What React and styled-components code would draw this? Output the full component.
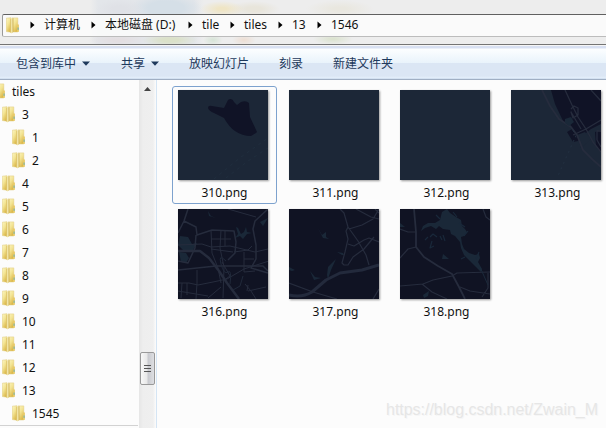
import React from "react";
import styled, { createGlobalStyle } from "styled-components";

const Global = createGlobalStyle`
  * { box-sizing: border-box; }
  body { margin: 0; background: #fcfcfc; overflow: hidden; }
`;

const Window = styled.div`
  position: relative;
  width: 606px;
  height: 428px;
  overflow: hidden;
  display: flex;
  flex-direction: column;
  background: #fcfcfc;
  color: #111;
  font: 12px/16px "Noto Sans", "Noto Sans CJK SC", sans-serif;
  white-space: nowrap;
`;

const Header = styled.header`
  height: 45px;
  flex: none;
  padding: 14px 0 0 2px;
  border-bottom: 1px solid #747474;
  background:
    radial-gradient(ellipse 24px 10px at 120px 9px, #dfe1e6 30%, transparent),
    radial-gradient(ellipse 36px 14px at 166px 8px, #d5dfe7 50%, transparent),
    radial-gradient(ellipse 22px 8px at 222px 9px, #efe5c5 20%, transparent),
    radial-gradient(ellipse 26px 8px at 254px 9px, #e8e5db 30%, transparent),
    radial-gradient(ellipse 34px 9px at 340px 9px, #e9e7df 20%, transparent),
    radial-gradient(ellipse 30px 7px at 118px 40px, #e3dee1 20%, transparent),
    radial-gradient(ellipse 28px 7px at 170px 40px, #dbe1c9 30%, transparent),
    radial-gradient(ellipse 10px 6px at 213px 40px, #d9e5d9 10%, transparent),
    radial-gradient(ellipse 12px 6px at 244px 40px, #eddfd5 10%, transparent),
    radial-gradient(ellipse 20px 6px at 333px 39px, #dce3d0 10%, transparent),
    linear-gradient(90deg, transparent 90px, #e3e6ea 98px 194px, transparent 204px),
    #ededed;
`;

const AddressBar = styled.nav`
  height: 23px;
  display: flex;
  align-items: center;
  padding-left: 3px;
  border: solid #606060;
  border-width: 1px 0 1px 1px;
  border-bottom-color: #bcbcbc;
  border-left-color: #999;
  border-radius: 2px 0 0 2px;
  background: rgba(253, 253, 253, 0.82);
`;

const Crumb = styled.span`
  display: flex;
  align-items: center;
  width: ${(p) => p.$width}px;
  flex: none;
  gap: 9px;
  padding-bottom: 1px;
`;

const Toolbar = styled.div`
  height: 35px;
  flex: none;
  display: flex;
  align-items: center;
  padding: 2px 0 0 16px;
  color: #1e395b;
  border-top: 1px solid #f5f5f5;
  border-bottom: 1px solid #a0afc3;
  background: linear-gradient(#d8e0f2 0 2px, #fcfeff 3px, #e9f3fb 17px, #dbe6f4 17px, #dbe6f4 30px, #e4effb 32px, #c3d3e7 33px);
`;

const Command = styled.span`
  display: flex;
  align-items: center;
  gap: 6px;
  flex: none;
  width: ${(p) => p.$width}px;
`;

const Body = styled.div`
  flex: 1;
  display: flex;
  min-height: 0;
`;

const Tree = styled.aside`
  width: 138px;
  height: 346px;
  flex: none;
  overflow: hidden;
  border-bottom: 1px solid #d2d2d2;
`;

const TreeRow = styled.div`
  height: 23px;
  display: flex;
  align-items: center;
  gap: 6px;
  margin-left: ${(p) => p.$indent}px;
`;

const Scrollbar = styled.div`
  width: 17px;
  flex: none;
  margin-left: 1px;
  padding: 7px 1px 0 0;
  display: flex;
  flex-direction: column;
  align-items: center;
  background: linear-gradient(90deg, #e6e6e6, #eee 4px, #efefef 14px, #f8f8f8 16px, #fcfcfc);
`;

const Thumb = styled.div`
  width: 15px;
  height: 33px;
  margin-top: 261px;
  flex: none;
  display: grid;
  place-items: center;
  border: 1px solid #999;
  border-radius: 2px;
  background: linear-gradient(90deg, #f8f8f8, #e8e8e8 45%, #c9cacf 55%, #dedfe2);
`;

const Files = styled.main`
  flex: 1;
  display: grid;
  grid-template-columns: repeat(4, 105px);
  grid-auto-rows: 118px;
  gap: 1px 6px;
  align-content: start;
  padding: 6px 0 0 15px;
  border-left: 1px solid #d5e5f4;
`;

const File = styled.figure`
  margin: 0;
  display: flex;
  flex-direction: column;
  align-items: center;
  gap: 5px;
  padding-top: 3px;
  border: 1px solid ${(p) => (p.$selected ? "#7da2ce" : "transparent")};
  border-radius: 3px;

  svg {
    display: block;
    flex: none;
    align-self: flex-start;
    margin-left: 5px;
    box-shadow: 1px 1px 2px rgba(0, 0, 0, 0.4);
  }
`;

const Watermark = styled.div`
  position: absolute;
  left: 386px;
  top: 400px;
  font: 16px/20px "Liberation Sans", sans-serif;
  color: #e6e6e6;
  letter-spacing: -0.02px;
  text-shadow: 1px 1px 0 #f6f6f6;
`;

const FolderIcon = () => (
  <svg width="14" height="17" viewBox="0 0 14 17">
    <defs>
      <linearGradient id="leaf" x1="0" y1="0" x2="0.6" y2="1">
        <stop offset="0" stopColor="#fcf6c4" />
        <stop offset="0.5" stopColor="#f3e493" />
        <stop offset="1" stopColor="#dcb94c" />
      </linearGradient>
      <linearGradient id="spine" x1="0" x2="1">
        <stop offset="0" stopColor="#d9bd62" />
        <stop offset="0.45" stopColor="#f5ebb0" />
        <stop offset="1" stopColor="#c9a94c" />
      </linearGradient>
    </defs>
    <path d="M6 .9H11.8V15H6Z" fill="url(#leaf)" stroke="#e3cd80" strokeWidth=".5" />
    <path d="M11 7.6h1.9v6.8l-.7.7H11Z" fill="#e8ca68" />
    <path d="M.3 1.2 5 .7V15.2L.3 14.6Z" fill="url(#leaf)" stroke="#dfc879" strokeWidth=".5" />
    <path d="M4.3 2 7.4 1V14.8L5.6 16.4 4.3 15.3Z" fill="url(#spine)" />
    <path d="M12.1 10.5v2.4" stroke="#62adb5" strokeWidth=".9" />
  </svg>
);

const RightArrow = () => (
  <svg width="5" height="8" viewBox="0 0 5 8"><path d="M.5 .5 4.5 4 .5 7.5Z" fill="#000" /></svg>
);
const DownArrow = () => (
  <svg width="8" height="5" viewBox="0 0 8 5"><path d="M0 .5h8L4 4.8Z" fill="#1e395b" /></svg>
);

const Road = styled.path`
  fill: none;
  stroke: ${(p) => p.$color || "#262c3d"};
  stroke-width: ${(p) => p.$w || 1};
  stroke-linejoin: round;
`;
const Water = styled.path`
  fill: #1a2838;
`;

const maps = {
  310: <>
    <path d="M30 18q0-3 4-2l12 2 4-8q4-3 6 2l3 3 4-3q5-2 8 1l1 14 7 15-1 1-5 3q-9 0-16-5-6-4-11-13l-10-5q-5-2-6-5Z" fill="#101326" />
    <Road d="M36 89 63 67 90 48M48 88 70 71 90 58" $color="#202e3e" strokeDasharray="3 4" />
  </>,
  311: null,
  312: null,
  313: <>
    <path d="M40 0H90V34L80 39 75 43l-3 7-10 2-6-10 5-3-3-8-5 2L44 14Z" fill="#101326" />
    <path d="M66 45 74 42 80 49 76 53 70 58Z" fill="#1c2737" />
    <path d="M84 42 90 40V62L85 56Z" fill="#101326" />
    <Road d="M31 0 39 16 48 29 60 37 66 45 72 60 81 69 90 77" $w="1.8" />
    <Road d="M54 0 61 15 67 27 75 39 82 52 90 62M60 19l3-3 4 2v7l-5 3-2-6 10 17M90 30l-15 9-13 6M80 0l10 11M86 50v-9h5M86 50l4 7" $w="1.3" />
    <Road d="M62 40l4 10M63 50 46 88" $color="#223041" strokeDasharray="2 4" />
    <Water d="M54 29l6-2 3 5-5 4-4-3Z" />
  </>,
  316: <>
    <Water d="M2 27 10 28 14 35 19 34 15 41 7 43 0 36ZM1 43l7 1 3 5-3 5-5-1ZM58 18l2 1 3 6 3-2 2-5 1 5 5 1-5 1-4 5-3-3-5 2 3-4ZM30 2l3 5 5 2-7-2ZM82 13l8-4-5 8Z" />
    <Road d="M10 0 6 12 0 24M6 12l12 6 1 8 15-5 22 1 2 11-1 11-7 7M0 52l10 2 7-15 1-13M90 0 77 12l-2 8 3 16v14l-5 9 17 5M0 61l38-4 47 0 5 5" $w="1.5" />
    <Road d="M0 42h22l9 7 10 13 8 12 12 16" $w="2.4" />
    <Road d="M50 0l28 8M0 36l24-1 9 3 19-1 25 6 13-3M33 21l1 23 6 15 3 15M33 30h20M33 40l22 3M43 21l-1 18 4 19-1 31M47 22v15M56 43l14-2 4-4M19 61v13l-1 16M0 74h11l9 2 15-3 14-3 17-10 25-8M44 53l8 14M52 67l-7 5M66 43v20l11-1M66 50h10M0 82l30 5M4 74l-1 15M9 74v12M30 89l13-11M67 75l6 7 5 8M70 76l-1 6M70 82l18-4" />
    <Road d="M48 52q-8-8-5 3t7 8 2 12M65 67l-3 10-7 4" $color="#20293a" />
  </>,
  317: <>
    <Water d="M29 19l4 7 4-3v5l3 2-6-1ZM48 43l5 3 2 0-1-2ZM38 66l1-8 8-8-5 11-3 9ZM21 62l5 6 6 1-7 2ZM0 58l6 3-3 1-3-1Z" />
    <Road d="M0 86q13 3 23-3L37 71l14-7 22-3 17-5" $w="3" $color="#232a3c" />
    <Road d="M51 0l4 4 4 14 10 14 8 14 3 10M90 4 86 0M90 0 84 10 73 16 60 20M59 18l-2 4 2 8-3 13-3 11 2 2 4 0 5-8 11-8 10-12M59 35l6 2 10-6 5-2 10 4M67 0l15 8 8 2M0 74l24 9 24 7M84 90l6-10" $w="1.2" />
  </>,
  318: <>
    <Water d="M42 3 47 0 50 4 56 8 61 11 62 17 65 20 67 23 64 27 61 28 62 35 64 40 69 44 75 46 79 45 80 49 78 53 82 60 81 63 76 58 70 52 64 46 61 39 60 33 55 27 51 25 50 21 43 20 39 17 36 20 31 17 25 19 21 22 23 17 28 14 35 14 40 11Z" />
    <Water d="M43 45l6 5-7 0ZM23 86l6-4-1 5-4 2ZM0 14l5 4-5 0Z" />
    <Road d="M53 3l4 5M59 14l6 4M64 27l4-5M76 50l3-7M65 48l-4 2M36 6l4 4M30 28l3-3 4 3M32 32l-2 7 4-2M40 27l2 4M43 26l2 6M25 31l3-3" $color="#19283a" $w="1.2" />
    <Road d="M14 0 16 23v15l8 10 14 9 14 8 7 13 6 12" $w="1.8" />
    <Road d="M0 20l8 3 8 0M16 38l-8 2-8 9M0 77l23-2 10-4 19-4 5-3 33-1M22 75l10 8 15 7M60 78l10 4 20 3M83 0l3 8 4 3M88 64v15l-6 9" $w="1.2" />
    <Road d="M80 58l4 9 4 9" $color="#1b2a3b" />
  </>,
};

const Tile = ({ id }) => (
  <svg width="90" height="90" viewBox="0 0 90 90">
    <rect width="90" height="90" fill={id < 316 ? "#1c2737" : "#101323"} />
    {maps[id]}
  </svg>
);

const crumbs = [["计算机", 61], ["本地磁盘 (D:)", 97], ["tile", 42], ["tiles", 48], ["13", 39], ["1546", 60]];
const commands = [["包含到库中", 105, true], ["共享", 68, true], ["放映幻灯片", 90], ["刻录", 54], ["新建文件夹", 70]];
const rows = [["tiles", -8], ["3", 2], ["1", 12], ["2", 12], ["4", 2], ["5", 2], ["6", 2], ["7", 2], ["8", 2], ["9", 2], ["10", 2], ["11", 2], ["12", 2], ["13", 2], ["1545", 12]];

export default function App() {
  return (
    <Window>
      <Global />
      <Header>
        <AddressBar>
          <Crumb $width={24}><FolderIcon /></Crumb>
          {crumbs.map(([name, width]) => <Crumb key={name} $width={width}><RightArrow />{name}</Crumb>)}
        </AddressBar>
      </Header>
      <Toolbar>
        {commands.map(([name, width, menu]) => <Command key={name} $width={width}>{name}{menu && <DownArrow />}</Command>)}
      </Toolbar>
      <Body>
        <Tree>
          {rows.map(([name, indent]) => <TreeRow key={name} $indent={indent}><FolderIcon />{name}</TreeRow>)}
        </Tree>
        <Scrollbar>
          <svg width="7" height="4" viewBox="0 0 7 4"><path d="M0 4 3.5 0 7 4Z" fill="#444" /></svg>
          <Thumb>
            <svg width="7" height="9" viewBox="0 0 7 9"><path d="M0 1.5h7M0 4.5h7M0 7.5h7" stroke="#555" /></svg>
          </Thumb>
        </Scrollbar>
        <Files>
          {[310, 311, 312, 313, 316, 317, 318].map((id) => (
            <File key={id} $selected={id === 310}><Tile id={id} />{id}.png</File>
          ))}
        </Files>
      </Body>
      <Watermark>https://blog.csdn.net/Zwain_M</Watermark>
    </Window>
  );
}
